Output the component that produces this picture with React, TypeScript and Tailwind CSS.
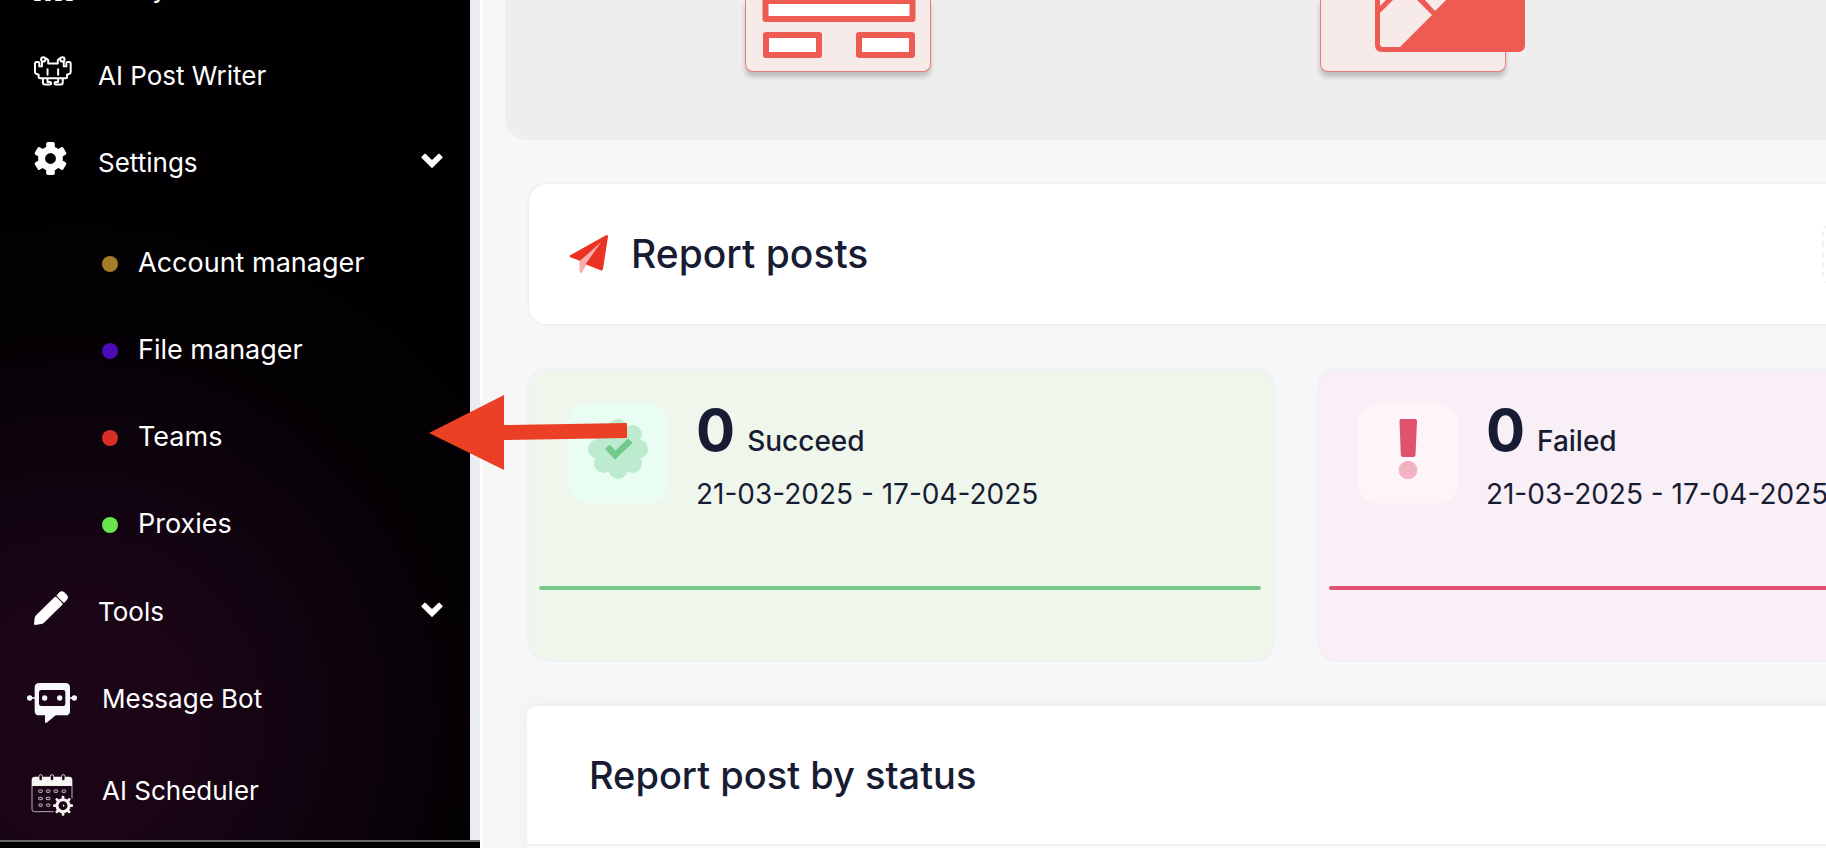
import React from "react";

interface SubItem {
  label: string;
  dot: string;
}

interface StatCardType {
  label: string;
  range: string;
  cardClass: string;
  iconClass: string;
  lineClass: string;
  icon: React.ReactNode;
}

const settingItems: SubItem[] = [
  { label: "Account manager", dot: "bg-[#a87b29]" },
  { label: "File manager", dot: "bg-[#4b0bb8]" },
  { label: "Teams", dot: "bg-[#d82f24]" },
  { label: "Proxies", dot: "bg-[#69e44c]" },
];

const BarsIcon = () => (
  <svg width="39" height="34" viewBox="0 0 39 34" fill="#fff">
    <rect x="0" y="19" width="7" height="14" rx="1" />
    <rect x="11" y="11" width="6" height="22" rx="1" />
    <rect x="21" y="15" width="7" height="18" rx="1" />
    <rect x="32" y="1" width="7" height="32" rx="1" />
  </svg>
);

const PixelBotIcon = () => (
  <svg
    width="38"
    height="32"
    viewBox="0 0 115 96"
    fill="none"
    stroke="#fff"
    strokeWidth="6"
    strokeLinejoin="round"
    strokeLinecap="round"
  >
    <circle cx="28" cy="10" r="6.5" />
    <circle cx="86" cy="10" r="6.5" />
    <path d="M37 7l6 5v10h29V12l6-5" />
    <path d="M24 18v13h-8V21q0-3-4-3H8q-5 0-5 5v25q0 5 5 6l6 2v8q0 3 4 3h78q4 0 4-3v-8l6-2q5-1 5-6V23q0-5-5-5h-4q-4 0-4 3v10h-8V18" />
    <path d="M41 40v16M73 40v16" />
    <path d="M27 69v11q0 6 6 6h15q4 0 4-4t-4-4h-7v-9M87 69v11q0 6-6 6H66q-4 0-4-4t4-4h7v-9" />
  </svg>
);

const GearIcon = () => (
  <svg width="33" height="33" viewBox="-50 -50 100 100" fill="#fff">
    <circle r="27" fill="none" stroke="#fff" strokeWidth="21" />
    {[0, 60, 120, 180, 240, 300].map((a) => (
      <rect
        key={a}
        x="-13"
        y="-50"
        width="26"
        height="24"
        rx="5"
        transform={`rotate(${a})`}
      />
    ))}
  </svg>
);

const PencilIcon = () => (
  <svg width="34" height="34" viewBox="0 0 102 102" fill="#fff">
    <path d="M62 18q3-2 6 1l16 16q3 3 1 6L30 95q-3 3-8 4l-18 3q-4 0-4-4l2-17q1-5 4-8z" />
    <path d="M69 12l8-9q7-5 14 1l8 8q6 7 0 14l-8 9q-2 1-4-1L69 16q-2-2 0-4z" />
  </svg>
);

const MessageBotIcon = () => (
  <svg width="50" height="40" viewBox="0 0 150 120" fill="#f8f9ff">
    <path
      fillRule="evenodd"
      d="M37 0h78q14 0 14 14v69q0 14-14 14H86l-27 22q-5 2-5-3V97H37q-14 0-14-14V14Q23 0 37 0zM43 21q-7 0-7 7v34q0 7 7 7h66q6 0 6-7V28q0-7-6-7z"
    />
    <circle cx="53" cy="45" r="8" />
    <circle cx="98" cy="45" r="8" />
    <circle cx="8" cy="45" r="8" />
    <circle cx="142" cy="45" r="8" />
    <path d="M8 43h16v4H8zM128 43h14v4h-14z" />
  </svg>
);

const SchedulerIcon = () => (
  <svg width="42" height="42" viewBox="0 0 126 126" fill="none">
    <path d="M2 36V18Q2 8 12 8h102q10 0 10 10v18z" fill="#f7f5f2" />
    {[29, 63, 97].map((x) => (
      <rect
        key={x}
        x={x - 5}
        y="2"
        width="10"
        height="18"
        rx="5"
        fill="#1a0616"
        stroke="#f7f5f2"
        strokeWidth="2.5"
      />
    ))}
    <path
      d="M3 36v70q0 7 7 7h58M123 36v38"
      stroke="#d9d3d8"
      strokeWidth="2.5"
    />
    <g stroke="#e6e1e5" strokeWidth="2.5">
      <rect x="23" y="48" width="11" height="7" rx="2" />
      <rect x="46" y="48" width="11" height="7" rx="2" />
      <rect x="69" y="48" width="11" height="7" rx="2" />
      <rect x="93" y="48" width="11" height="7" rx="2" />
      <rect x="23" y="70" width="11" height="7" rx="2" />
      <rect x="46" y="70" width="11" height="7" rx="2" />
      <rect x="23" y="90" width="11" height="7" rx="3" />
      <rect x="46" y="90" width="11" height="7" rx="3" />
    </g>
    <g transform="translate(96 95)" fill="#f7f5f2">
      <circle r="18" stroke="#f7f5f2" strokeWidth="9" fill="none" />
      {[0, 45, 90, 135, 180, 225, 270, 315].map((a) => (
        <rect
          key={a}
          x="-4"
          y="-30"
          width="8"
          height="10"
          rx="3"
          transform={`rotate(${a})`}
        />
      ))}
      <path d="M-1-5l6 5-4 4z" />
    </g>
  </svg>
);

const ChevronIcon = () => (
  <svg width="22" height="16" viewBox="0 0 66 48" className="mb-1">
    <path
      d="M12 4l21 20L54 4l9 9-30 30L3 13z"
      fill="#fff"
      stroke="#fff"
      strokeWidth="4"
      strokeLinejoin="round"
    />
  </svg>
);

const PlaneIcon = () => (
  <svg width="40" height="40" viewBox="0 0 40 40">
    <path d="M10.5 26.5v10.8q.8 2.5 2.8 1l4-8L33 7z" fill="#f8aeaa" />
    <path
      d="M37 1.3q2-.8 2 1.2l-5 32.5q-.5 2-2.5 1.3L16.5 30.3 32 8.3 11 26.7 1.2 23.3q-1.4-.9 0-2z"
      fill="#ec3323"
    />
  </svg>
);

const SuccessIcon = () => (
  <svg width="60" height="60" viewBox="0 0 60 60">
    <g fill="#bdebcf">
      <circle cx="30" cy="30" r="21" />
      {[0, 45, 90, 135, 180, 225, 270, 315].map((a) => (
        <circle
          key={a}
          cx="30"
          cy="9.5"
          r="9.5"
          transform={`rotate(${a} 30 30)`}
        />
      ))}
    </g>
    <path
      d="M17.500 30l4-4 6 6L40 20l4 4-17 16z"
      fill="#72c98c"
      stroke="#72c98c"
      strokeLinejoin="round"
    />
  </svg>
);

const FailedIcon = () => (
  <svg width="60" height="60" viewBox="0 0 60 60">
    <path
      d="M23 0h14q2 0 2 2l-1.5 34q-.2 2-2.2 2H25q-2 0-2.2-2L21.5 2q0-2 1.5-2z"
      fill="#e0526f"
    />
    <circle cx="30" cy="51" r="9.3" fill="#f1b2c1" />
  </svg>
);

const StatCard: React.FC<StatCardType> = ({
  label,
  range,
  cardClass,
  iconClass,
  lineClass,
  icon,
}) => (
  <section
    className={`rounded-[20px] border-2 border-[#f0f1f7] pt-[33px] pb-[70px] ${cardClass}`}
  >
    <div className="flex gap-7 pl-[39px]">
      <div
        className={`flex size-[100px] items-center justify-center rounded-[20px] pb-2 ${iconClass}`}
      >
        {icon}
      </div>
      <div className="whitespace-nowrap">
        <div className="flex items-baseline gap-3">
          <span className="text-[58px] leading-[54px] font-bold">0</span>
          <span className="text-[28px] leading-7 font-medium">{label}</span>
        </div>
        <p className="mt-4 text-[28px] leading-[42px]">{range}</p>
      </div>
    </div>
    <div className={`mt-[71px] mr-3 ml-2.5 h-1 rounded-full ${lineClass}`} />
  </section>
);

const Sidebar = () => (
  <aside className="flex w-[482px] shrink-0 flex-col border-r-2 border-white bg-black text-[26px] text-white">
    <div className="flex min-h-0 flex-1">
      <nav className="flex flex-1 flex-col justify-end overflow-hidden bg-[radial-gradient(circle_at_80px_720px,#1c0618_0px,#190516_130px,#0e030d_270px,#040104_390px,#020002_520px)] pb-1.5">
        <a href="#" className="flex h-[87px] shrink-0 items-center pl-[34px]">
          <span className="w-16 pb-2">
            <BarsIcon />
          </span>
          Analytics
        </a>
        <a href="#" className="flex h-[87px] shrink-0 items-center pl-[34px]">
          <span className="w-16 pb-2">
            <PixelBotIcon />
          </span>
          AI Post Writer
        </a>
        <button
          type="button"
          className="flex h-[87px] shrink-0 items-center pr-[27px] pl-[34px] text-left"
        >
          <span className="w-16 pb-2">
            <GearIcon />
          </span>
          <span className="flex-1">Settings</span>
          <ChevronIcon />
        </button>
        <ul className="shrink-0 pt-[14px] text-[27px]">
          {settingItems.map((item) => (
            <li key={item.label}>
              <a href="#" className="flex h-[87px] items-center gap-5 pl-[102px]">
                <span className={`size-4 rounded-full ${item.dot}`} />
                {item.label}
              </a>
            </li>
          ))}
        </ul>
        <button
          type="button"
          className="flex h-[87px] shrink-0 items-center pr-[27px] pl-[34px] text-left"
        >
          <span className="w-16 pb-2">
            <PencilIcon />
          </span>
          <span className="flex-1">Tools</span>
          <ChevronIcon />
        </button>
        <a href="#" className="flex h-[87px] shrink-0 items-center gap-[25px] pl-[27px]">
          <span className="flex w-[50px] justify-center pt-2">
            <MessageBotIcon />
          </span>
          Message Bot
        </a>
        <a href="#" className="mt-[5px] flex h-[87px] shrink-0 items-center gap-[25px] pl-[27px]">
          <span className="flex w-[50px] justify-center pt-2">
            <SchedulerIcon />
          </span>
          AI Scheduler
        </a>
      </nav>
      {/* scroll track */}
      <div className="w-2.5 bg-[#e9ecf1]" />
    </div>
    <div className="h-2 border-t-2 border-[#666] bg-black" />
  </aside>
);

const Banner = () => (
  <div className="flex gap-[389px] rounded-bl-[22px] bg-[#eeeeee] pb-[68px] pl-[240px]">
    <div className="h-[72px] w-[186px] shrink-0 rounded-b-lg border border-t-0 border-[#ee7b73] bg-[#f7ebe9] shadow-[0_5px_5px_rgba(0,0,0,0.2)]">
      <svg width="184" height="70" viewBox="1 0 184 70">
        <g fill="#fff" stroke="#ee5b52" strokeWidth="6" strokeLinejoin="round">
          <rect x="20.5" y="1" width="147" height="18" />
          <rect x="21" y="35" width="53" height="20" />
          <rect x="114" y="35" width="53" height="20" />
        </g>
      </svg>
    </div>
    <div className="h-[72px] w-[186px] shrink-0 rounded-b-lg border border-t-0 border-[#ee7b73] bg-[#f7ebe9] shadow-[0_5px_5px_rgba(0,0,0,0.2)]">
      <svg
        width="184"
        height="70"
        viewBox="1 0 184 70"
        className="overflow-visible"
      >
        <path d="M55 0h150v45q0 7-7 7H62q-7 0-7-7z" fill="#ee5b52" />
        <g fill="#f7ebe9">
          <path d="M60 13L73 0h24l15 15-32 32H63q-3 0-3-3z" />
          <path d="M105 0h21l-11 11zM60 0h6l-6 6z" />
        </g>
      </svg>
    </div>
  </div>
);

const App: React.FC = () => {
  return (
    <div className="relative flex h-screen overflow-hidden bg-[#f7f7f7] font-['Inter',sans-serif] text-[#181c32]">
      <Sidebar />
      <main className="min-w-0 flex-1 overflow-hidden">
        <div className="w-[120%] pl-[23px]">
          <Banner />
          <div className="flex flex-col gap-[42px] pt-[42px] pr-[30px] pl-[22px]">
            <section className="flex h-36 items-center justify-between rounded-[20px] border-2 border-[#f0f1f7] bg-white px-10">
              <div className="flex items-center gap-[22px]">
                <PlaneIcon />
                <h2 className="text-[39px] font-medium">Report posts</h2>
              </div>
              <button
                type="button"
                aria-label="Date range"
                className="h-16 w-[201px] rounded-xl border-2 border-dashed border-[#f0f1f7]"
              />
            </section>
            <div className="grid grid-cols-2 gap-[42px]">
              <StatCard
                label="Succeed"
                range="21-03-2025 - 17-04-2025"
                cardClass="bg-[#eff7ed]"
                iconClass="bg-[#e9fdf3]"
                lineClass="bg-[#78cb8b]"
                icon={<SuccessIcon />}
              />
              <StatCard
                label="Failed"
                range="21-03-2025 - 17-04-2025"
                cardClass="bg-[#f8eff7]"
                iconClass="bg-[#fef5f8]"
                lineClass="bg-[#e0526f]"
                icon={<FailedIcon />}
              />
            </div>
            <section className="min-h-80 rounded-[10px] border-t-2 border-[#f0f1f7] bg-[#fafafa] shadow-[0_0_20px_rgba(76,87,125,0.06)]">
              <div className="flex h-[140px] items-center rounded-t-[10px] border-b-2 border-[#f0f1f7] bg-white pl-[62px]">
                <h2 className="text-[38px] font-medium">
                  Report post by status
                </h2>
              </div>
            </section>
          </div>
        </div>
      </main>
      {/* pointer to the Teams entry */}
      <svg
        width="198"
        height="75"
        viewBox="0 0 198 75"
        className="absolute top-[395px] left-[429px]"
      >
        <path d="M0 38L75 0v30l123-2v15L75 45v30z" fill="#eb4026" />
      </svg>
    </div>
  );
};

export default App;
